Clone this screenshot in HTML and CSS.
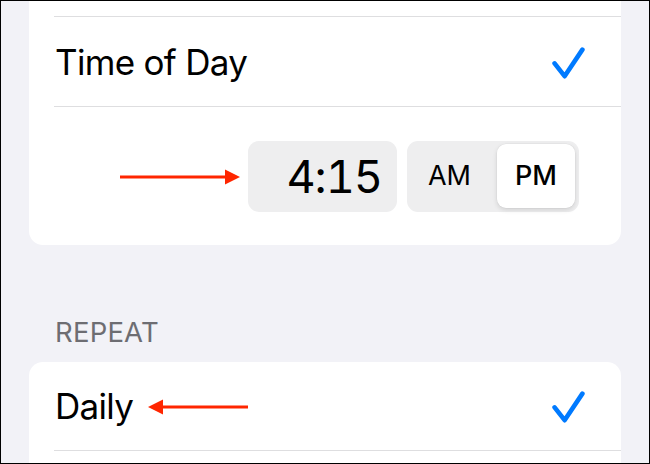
FILE: index.html
```html
<!DOCTYPE html>
<html lang="en">
<head>
<meta charset="utf-8">
<title>Time of Day</title>
<link rel="stylesheet" href="styles.css">
</head>
<body>
<div class="screen">
  <div class="card card-top">
    <div class="spacer"></div>
    <div class="sep"></div>
    <div class="row">
      <span class="label">Time of Day</span>
      <svg class="check" width="33" height="32" viewBox="0 0 33 32"><path d="M2.6 16.4 L12.6 29.2 L30.4 2.6" fill="none" stroke="#007aff" stroke-width="4.6" stroke-linecap="round" stroke-linejoin="round"/></svg>
    </div>
    <div class="sep"></div>
    <div class="picker-row">
      <svg class="arrow arrow-right" width="120" height="16" viewBox="0 0 120 16"><path d="M0 8 H106" stroke="#ff2600" stroke-width="3"/><path d="M105 0.5 L120 8 L105 15.5 Z" fill="#ff2600"/></svg>
      <div class="time-box">4:15</div>
      <div class="segmented">
        <div class="seg seg-am">AM</div>
        <div class="seg seg-pm">PM</div>
      </div>
    </div>
  </div>
  <div class="section-header">REPEAT</div>
  <div class="card card-bottom">
    <div class="row">
      <span class="label-group">
        <span class="label">Daily</span>
        <svg class="arrow arrow-left" width="100" height="16" viewBox="0 0 100 16"><path d="M14 8 H100" stroke="#ff2600" stroke-width="3"/><path d="M15 0.5 L0 8 L15 15.5 Z" fill="#ff2600"/></svg>
      </span>
      <svg class="check" width="33" height="32" viewBox="0 0 33 32"><path d="M2.6 16.4 L12.6 29.2 L30.4 2.6" fill="none" stroke="#007aff" stroke-width="4.6" stroke-linecap="round" stroke-linejoin="round"/></svg>
    </div>
    <div class="sep"></div>
    <div class="row"></div>
  </div>
</div>
</body>
</html>
```

FILE: styles.css
```css
html, body {
  margin: 0;
  padding: 0;
  background: #f2f2f7;
}

.screen {
  box-sizing: border-box;
  width: 650px;
  height: 464px;
  border: 1px solid #000;
  background: #f2f2f7;
  padding: 0 28px;
  overflow: hidden;
  font-family: "Inter", "Liberation Sans", sans-serif;
  color: #000;
}

.card {
  background: #fff;
}

.card-top {
  border-radius: 0 0 14px 14px;
}

.card-bottom {
  border-radius: 14px 14px 0 0;
}

.spacer {
  height: 15px;
}

.sep {
  height: 1px;
  background: #dedee0;
  margin-left: 25px;
}

.row {
  height: 89px;
  display: flex;
  align-items: center;
  justify-content: space-between;
  padding: 0 36px 0 26px;
}

.card-bottom .row {
  height: 88px;
}

.label {
  font-size: 35px;
  letter-spacing: -0.7px;
}

.label-group {
  display: flex;
  align-items: center;
}

.check {
  display: block;
  margin-top: 2px;
}

.arrow {
  display: block;
}

.arrow-left {
  margin-left: 15px;
  margin-top: 2px;
}

.picker-row {
  height: 138px;
  display: flex;
  align-items: center;
  justify-content: flex-end;
  padding-right: 42px;
}

.arrow-right {
  margin-right: 8px;
  margin-top: 2px;
}

.time-box {
  box-sizing: border-box;
  width: 149px;
  height: 71px;
  background: #eeeeef;
  border-radius: 11px;
  display: flex;
  align-items: center;
  justify-content: flex-end;
  padding-right: 15px;
  font-size: 45px;
  letter-spacing: -1px;
  font-variant-numeric: tabular-nums;
}

.segmented {
  box-sizing: border-box;
  width: 172px;
  height: 71px;
  margin-left: 10px;
  background: #eeeeef;
  border-radius: 11px;
  display: flex;
  padding: 3px 4px 4px 3px;
}

.seg {
  display: flex;
  align-items: center;
  justify-content: center;
  font-size: 27px;
}

.seg-am {
  flex: 1;
  padding-right: 8px;
}

.seg-pm {
  width: 78px;
  background: #fff;
  border-radius: 9px;
  font-weight: 500;
  box-shadow: 0 2px 5px rgba(0, 0, 0, 0.12), 0 0 0 0.5px rgba(0, 0, 0, 0.04);
}

.section-header {
  padding: 71px 0 14px 26px;
  height: 32px;
  line-height: 32px;
  font-size: 27.5px;
  letter-spacing: 0.2px;
  color: #6d6d72;
}
```
